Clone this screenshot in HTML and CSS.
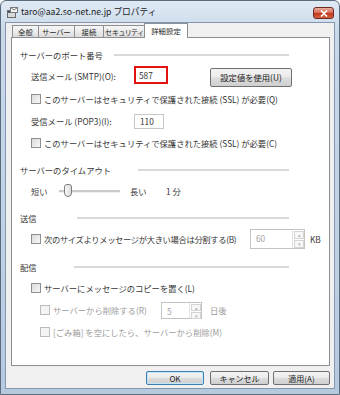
FILE: index.html
```html
<!DOCTYPE html>
<html lang="ja">

<head>
    <meta charset="UTF-8">
    <title>taro@aa2.so-net.ne.jp プロパティ</title>
    <link rel="stylesheet" href="styles.css">
</head>

<body>
    <div class="window">
        <div class="titlebar">
            <svg class="app-icon" width="11" height="11" viewBox="0 0 11 11">
                <rect x="0.5" y="3.5" width="8" height="7" fill="#d8d8d8" stroke="#6b6b6b" />
                <rect x="1" y="4" width="7" height="2" fill="#4a5a6a" />
                <rect x="3.5" y="0.5" width="7" height="5" fill="#f4f4f4" stroke="#7a7a7a" />
                <path d="M3.5 0.5 L7 3 L10.5 0.5" fill="none" stroke="#7a7a7a" />
            </svg>
            <span class="title">taro@aa2.so-net.ne.jp プロパティ</span>
            <div class="close">
                <svg width="8" height="7" viewBox="0 0 8 7">
                    <path d="M1 0.5 L7 6.5 M7 0.5 L1 6.5" stroke="#fff" stroke-width="1.6" />
                </svg>
            </div>
        </div>

        <div class="client">
            <div class="tabs">
                <div class="tab tab-all">全般</div>
                <div class="tab tab-server">サーバー</div>
                <div class="tab tab-conn">接続</div>
                <div class="tab tab-sec">セキュリティ</div>
                <div class="tab tab-adv active">詳細設定</div>
            </div>

            <div class="panel">
                <!-- サーバーのポート番号 -->
                <div class="heading">
                    <span class="heading-text">サーバーのポート番号</span>
                    <span class="rule rule-port"></span>
                </div>
                <div class="row row-tall">
                    <span class="label">送信メール (SMTP)(O):</span>
                    <span class="textbox highlight">587</span>
                    <span class="btn btn-default-value">設定値を使用(U)</span>
                </div>
                <div class="row">
                    <span class="check"></span>
                    <span>このサーバーはセキュリティで保護された接続 (SSL) が必要(Q)</span>
                </div>
                <div class="row">
                    <span class="label">受信メール (POP3)(I):</span>
                    <span class="textbox">110</span>
                </div>
                <div class="row">
                    <span class="check"></span>
                    <span>このサーバーはセキュリティで保護された接続 (SSL) が必要(C)</span>
                </div>

                <!-- タイムアウト -->
                <div class="heading spaced">
                    <span class="heading-text">サーバーのタイムアウト</span>
                    <span class="rule rule-timeout"></span>
                </div>
                <div class="row">
                    <span class="short">短い</span>
                    <span class="slider">
                        <span class="thumb"></span>
                    </span>
                    <span class="long">長い</span>
                    <span class="minutes">1 分</span>
                </div>

                <!-- 送信 -->
                <div class="heading spaced">
                    <span class="heading-text">送信</span>
                    <span class="rule rule-send"></span>
                </div>
                <div class="row">
                    <span class="check"></span>
                    <span class="split-text">次のサイズよりメッセージが大きい場合は分割する(B)</span>
                    <span class="spinbox spin-size">
                        <span class="spin-value">60</span>
                        <span class="spin-btns"><span>▴</span><span>▾</span></span>
                    </span>
                    <span class="unit">KB</span>
                </div>

                <!-- 配信 -->
                <div class="heading spaced-more">
                    <span class="heading-text">配信</span>
                    <span class="rule rule-deliver"></span>
                </div>
                <div class="row">
                    <span class="check"></span>
                    <span>サーバーにメッセージのコピーを置く(L)</span>
                </div>
                <div class="row sub disabled">
                    <span class="check"></span>
                    <span class="delete-text">サーバーから削除する(R)</span>
                    <span class="spinbox spin-days">
                        <span class="spin-value">5</span>
                        <span class="spin-btns"><span>▴</span><span>▾</span></span>
                    </span>
                    <span class="unit-days">日後</span>
                </div>
                <div class="row sub disabled">
                    <span class="check"></span>
                    <span>[ごみ箱] を空にしたら、サーバーから削除(M)</span>
                </div>
            </div>

            <div class="buttons">
                <span class="btn btn-ok">OK</span>
                <span class="btn btn-cancel">キャンセル</span>
                <span class="btn btn-apply">適用(A)</span>
            </div>
        </div>
    </div>
</body>

</html>
```

FILE: styles.css
```css
body {
    margin: 0;
    padding: 0;
    font-family: "Noto Sans CJK JP", "Noto Sans", sans-serif;
    font-size: 8.3px;
    color: #363636;
    white-space: nowrap;
}

.window {
    width: 340px;
    height: 395px;
    box-sizing: border-box;
    border: 1px solid #5a6b7e;
    border-radius: 6px 6px 0 0;
    background: linear-gradient(180deg, #dfe9f4 0%, #c9d9ea 8%, #bfd1e5 60%, #b5c9df 100%);
}

.titlebar {
    height: 21px;
    display: flex;
    align-items: center;
    padding-left: 6px;
}

.app-icon {
    margin-top: 1px;
}

.title {
    margin-left: 3px;
    color: #1d1d1d;
    font-size: 8.7px;
    flex: 1;
}

.close {
    width: 19px;
    height: 10px;
    margin-right: 5px;
    margin-top: 3px;
    border: 1px solid #6e2a20;
    border-radius: 3px;
    background: linear-gradient(180deg, #eab0a3 0%, #d86e58 45%, #c23a1f 55%, #d5603f 100%);
    display: flex;
    align-items: center;
    justify-content: center;
}

.client {
    margin: 0 4px 0 4px;
    height: 367px;
    box-sizing: border-box;
    border: 1px solid #8397ae;
    background: #f0f0f0;
}

/* tabs */
.tabs {
    height: 14px;
    display: flex;
    align-items: flex-end;
    padding-left: 6px;
}

.tab {
    height: 12px;
    box-sizing: border-box;
    border: 1px solid #8c8e94;
    border-bottom: none;
    margin-right: -1px;
    background: linear-gradient(180deg, #f6f6f6 0%, #ebebeb 50%, #dcdcdc 100%);
    text-align: center;
    line-height: 11px;
    font-size: 7.4px;
    font-feature-settings: "palt";
    color: #2a2a2a;
}

.tab-all { width: 27px; }
.tab-server { width: 37px; }
.tab-conn { width: 30px; }
.tab-sec { width: 42px; }

.tab.active {
    width: 44px;
    height: 15px;
    margin-bottom: -1px;
    background: #fff;
    position: relative;
    z-index: 1;
    line-height: 14px;
}

.panel {
    margin: 0 4px 0 5px;
    height: 329px;
    box-sizing: border-box;
    border: 1px solid #8c8e94;
    background: #fff;
    padding: 8px 0 0 8px;
}

.heading {
    height: 18px;
    display: flex;
    align-items: center;
    padding-right: 40px;
}

.heading.spaced {
    height: 20px;
    margin-top: 6px;
}

.heading.spaced-more {
    height: 20px;
    margin-top: 7px;
}

.rule {
    flex: 1;
    height: 2px;
    background: #d9d9d9;
}

.rule-port { margin-left: 11px; }
.rule-timeout { margin-left: 27px; }
.rule-send { margin-left: 40px; }
.rule-deliver { margin-left: 37px; }

.row {
    height: 22px;
    display: flex;
    align-items: center;
    padding-left: 11px;
}

.row-tall {
    height: 24px;
}

.row.sub {
    padding-left: 20px;
}

.disabled {
    color: #9b9b9b;
}

.label {
    width: 103px;
}

.check {
    width: 8px;
    height: 8px;
    border: 1px solid #8f8f8f;
    background: linear-gradient(135deg, #dcdcdc, #f6f6f6);
    margin-right: 3px;
    flex-shrink: 0;
}

.disabled .check {
    border-color: #bcbcbc;
    background: #f4f4f4;
}

.textbox {
    width: 30px;
    height: 15px;
    box-sizing: border-box;
    border: 1px solid #c7c7c7;
    padding-left: 5px;
    line-height: 13px;
}

.textbox.highlight {
    width: 34px;
    height: 18px;
    border: 2px solid #e3120d;
    padding-left: 3px;
    margin-top: -2px;
    line-height: 14px;
}

.btn {
    box-sizing: border-box;
    border: 1px solid #707070;
    border-radius: 2px;
    background: linear-gradient(180deg, #f3f3f3 0%, #ebebeb 48%, #dcdcdc 52%, #cfcfcf 100%);
    display: flex;
    align-items: center;
    justify-content: center;
    color: #1c1c1c;
}

.btn-default-value {
    width: 82px;
    height: 19px;
    margin-left: 42px;
    margin-top: 2px;
}

/* slider */
.short {
    width: 28px;
}

.slider {
    width: 61px;
    height: 2px;
    background: #c9c9c9;
    border-bottom: 1px solid #efefef;
    position: relative;
}

.thumb {
    position: absolute;
    left: 5px;
    top: -6px;
    width: 6px;
    height: 11px;
    border: 1px solid #7d7d7d;
    border-radius: 3px 3px 4px 4px;
    background: linear-gradient(90deg, #f8f8f8, #dcdcdc);
}

.long {
    margin-left: 10px;
    width: 36px;
}

/* spin boxes */
.spinbox {
    display: flex;
    flex-shrink: 0;
    box-sizing: border-box;
    border: 1px solid #c3c3c3;
    color: #a3a3a3;
}

.split-text {
    width: 206px;
    letter-spacing: -0.35px;
}

.delete-text {
    width: 108px;
}

.spin-size {
    width: 55px;
    height: 20px;
}

.spin-days {
    width: 41px;
    height: 17px;
}

.spin-value {
    flex: 1;
    padding: 2px 0 0 5px;
}

.spin-btns {
    width: 11px;
    display: flex;
    flex-direction: column;
    border-left: 1px solid #e2e2e2;
}

.spin-btns span {
    flex: 1;
    border: 1px solid #d4d4d4;
    margin: 1px 0 0 1px;
    font-size: 5px;
    line-height: 5px;
    text-align: center;
    color: #b0b0b0;
    background: #f7f7f7;
}

.unit {
    margin-left: 5px;
}

.unit-days {
    margin-left: 8px;
}

/* dialog buttons */
.buttons {
    display: flex;
    justify-content: flex-end;
    margin: 5px 4px 0 0;
}

.buttons .btn {
    height: 14px;
    font-size: 8px;
}

.btn-ok {
    width: 58px;
    border-color: #3c7fb1;
    box-shadow: inset 0 0 0 1px #c4e5f6;
}

.btn-cancel {
    width: 59px;
    margin-left: 6px;
}

.btn-apply {
    width: 57px;
    margin-left: 4px;
}
```
